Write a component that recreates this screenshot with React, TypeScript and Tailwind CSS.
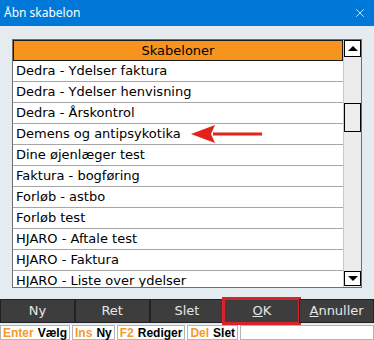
import { X } from "lucide-react";

const rows = [
  "Dedra - Ydelser faktura",
  "Dedra - Ydelser henvisning",
  "Dedra - Årskontrol",
  "Demens og antipsykotika",
  "Dine øjenlæger test",
  "Faktura - bogføring",
  "Forløb - astbo",
  "Forløb test",
  "HJARO - Aftale test",
  "HJARO - Faktura",
  "HJARO - Liste over ydelser",
];

const shortcuts = [
  { key: "Enter", label: "Vælg" },
  { key: "Ins", label: "Ny" },
  { key: "F2", label: "Rediger" },
  { key: "Del", label: "Slet" },
];

function Btn({ children, active }: { children: React.ReactNode; active?: boolean }) {
  return (
    <div
      className={`flex h-full flex-1 items-center justify-center border border-[#222] bg-[#3d3d3d] text-[13px] text-[#e6e6e6] ${
        active ? "outline-[3px] outline-[#d9232a] outline -outline-offset-1" : ""
      }`}
    >
      {children}
    </div>
  );
}

export default function App() {
  return (
    <div className="flex h-[340px] w-[374px] flex-col overflow-hidden bg-[#e6ebf0] font-['DejaVu_Sans',sans-serif]">
      {/* titellinje */}
      <div className="flex h-[26px] shrink-0 items-center justify-between bg-[#0078d7] pl-[4px] pr-[7px] font-['Noto_Sans',sans-serif] text-[12px] text-white">
        <span>Åbn skabelon</span>
        <X className="h-[14px] w-[14px]" strokeWidth={1.3} />
      </div>

      {/* liste */}
      <div className="px-[12px] pt-[13px]">
        <div className="relative flex h-[249px] border border-[#6e6e6e] bg-white">
          <div className="flex min-w-0 flex-1 flex-col overflow-hidden">
            <div className="flex h-[21px] shrink-0 items-center justify-center border border-[#1a1a1a] bg-[#f7941d] text-[13px] text-black">
              Skabeloner
            </div>
            {rows.map((r) => (
              <div
                key={r}
                className="flex h-[21px] shrink-0 items-center border-b border-[#a6a6a6] pl-[3px] text-[13px] text-black"
              >
                {r}
              </div>
            ))}
          </div>
          <div className="flex w-[18px] shrink-0 flex-col border-l border-[#c8c8c8] bg-[#ececec]">
            <div className="flex h-[17px] items-center justify-center border border-black bg-white">
              <div className="h-0 w-0 border-x-[5px] border-b-[5px] border-x-transparent border-b-black" />
            </div>
            <div className="mt-[46px] h-[29px] border border-black bg-[#ededed]" />
            <div className="flex-1" />
            <div className="mb-[1px] flex h-[15px] items-center justify-center border border-black bg-white">
              <div className="h-0 w-0 border-x-[5px] border-t-[5px] border-x-transparent border-t-black" />
            </div>
          </div>

          {/* rød pil */}
          <svg className="absolute left-[176px] top-[83px]" width="74" height="22" viewBox="0 0 74 22">
            <path d="M24 9.5 H73 V12.5 H24 Z" fill="#e2231a" />
            <path d="M2 11 L26 2 L22 11 L26 20 Z" fill="#e2231a" />
          </svg>
        </div>
      </div>

      {/* knapper */}
      <div className="mt-[11px] flex h-[24px] shrink-0">
        <Btn>Ny</Btn>
        <Btn>Ret</Btn>
        <Btn>Slet</Btn>
        <Btn active>
          <span>
            <span className="underline">O</span>K
          </span>
        </Btn>
        <Btn>
          <span>
            <span className="underline">A</span>nnuller
          </span>
        </Btn>
      </div>

      {/* genveje */}
      <div className="mt-[2px] flex h-[15px] shrink-0 bg-white font-['Liberation_Sans',sans-serif] text-[12px] font-bold">
        {shortcuts.map((s) => (
          <div key={s.key} className="mr-[2px] flex items-center gap-[4px] border border-[#b4b4b4] px-[2px] leading-none">
            <span className="text-[#f39a2c]">{s.key}</span>
            <span className="text-black">{s.label}</span>
          </div>
        ))}
        <div className="flex-1 border border-[#b4b4b4]" />
      </div>
    </div>
  );
}
